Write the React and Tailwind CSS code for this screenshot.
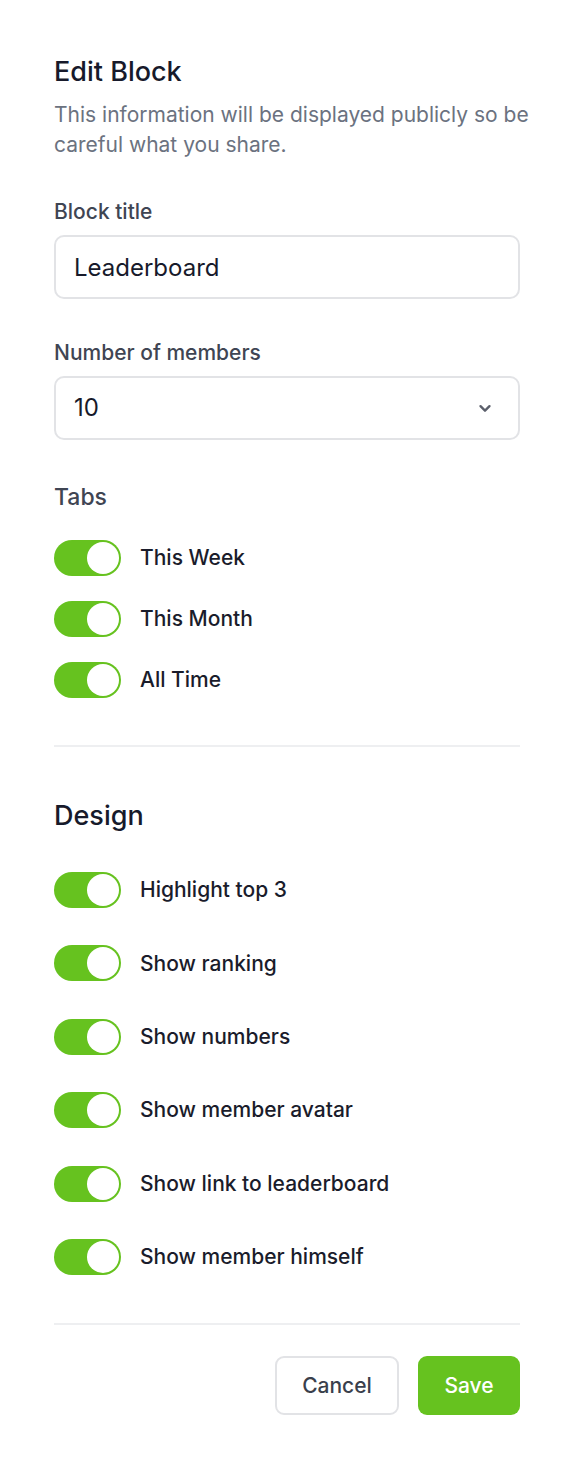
import React, { useState } from 'react';

function Toggle({ label, defaultOn = true }) {
  const [on, setOn] = useState(defaultOn);
  return (
    <label className="flex items-center gap-[19px] cursor-pointer">
      <button
        type="button"
        onClick={() => setOn(!on)}
        className={`flex items-center w-[67px] h-[36px] rounded-full p-[2px] ${on ? 'bg-[#66c21f] justify-end' : 'bg-gray-200 justify-start'}`}
      >
        <span className="block w-[32px] h-[32px] rounded-full bg-white" />
      </button>
      <span className="text-[21px] font-medium text-[#1a1c2b]">{label}</span>
    </label>
  );
}

function App() {
  const [title, setTitle] = useState('Leaderboard');
  const [count, setCount] = useState('10');

  const tabs = ['This Week', 'This Month', 'All Time'];
  const design = [
    'Highlight top 3',
    'Show ranking',
    'Show numbers',
    'Show member avatar',
    'Show link to leaderboard',
    'Show member himself',
  ];

  return (
    <div className="min-h-[1459px] bg-white px-[54px] pt-[55px] font-['Inter',sans-serif]">
      <h2 className="text-[27px] leading-[34px] font-medium text-[#171a2b]">Edit Block</h2>
      <p className="mt-[11px] -mr-[30px] text-[21px] leading-[30px] text-[#6b7280]">
        This information will be displayed publicly so be careful what you share.
      </p>

      <div className="mt-[38px]">
        <label className="block text-[21px] leading-[28px] font-medium text-[#3f4553]">Block title</label>
        <input
          type="text"
          value={title}
          onChange={(e) => setTitle(e.target.value)}
          className="mt-[9px] block w-full h-[64px] px-[18px] rounded-[10px] border-2 border-[#e2e3e6] text-[24px] text-[#171a2b] outline-none"
        />
      </div>

      <div className="mt-[40px]">
        <label className="block text-[21px] leading-[28px] font-medium text-[#3f4553]">Number of members</label>
        <div className="relative mt-[9px]">
          <select
            value={count}
            onChange={(e) => setCount(e.target.value)}
            className="block w-full h-[64px] pl-[18px] pr-[50px] rounded-[10px] border-2 border-[#e2e3e6] bg-white text-[24px] text-[#171a2b] appearance-none outline-none"
          >
            <option>5</option>
            <option>10</option>
            <option>20</option>
          </select>
          <svg
            className="pointer-events-none absolute right-[26px] top-1/2 -translate-y-1/2 w-[18px] h-[18px] text-[#5b5f6b]"
            viewBox="0 0 20 20"
            fill="none"
            stroke="currentColor"
            strokeWidth="2.6"
            strokeLinecap="round"
            strokeLinejoin="round"
          >
            <path d="M5 8l5 5 5-5" />
          </svg>
        </div>
      </div>

      <h3 className="mt-[42px] text-[23px] leading-[30px] font-medium text-[#3f4553]">Tabs</h3>
      <div className="mt-[28px] flex flex-col gap-[25px]">
        {tabs.map((t) => (
          <Toggle key={t} label={t} />
        ))}
      </div>

      <div className="mt-[47px] border-t-2 border-[#eeeff1]" />

      <h3 className="mt-[52px] text-[27px] leading-[34px] font-medium text-[#171a2b]">Design</h3>
      <div className="mt-[39px] flex flex-col gap-[37.4px]">
        {design.map((d) => (
          <Toggle key={d} label={d} />
        ))}
      </div>

      <div className="mt-[48px] border-t-2 border-[#eeeff1]" />

      <div className="mt-[31px] flex justify-end gap-[19px]">
        <button
          type="button"
          className="h-[59px] w-[124px] rounded-[9px] border-2 border-[#e2e3e6] bg-white text-[21px] font-medium text-[#3a3f4c]"
        >
          Cancel
        </button>
        <button
          type="button"
          className="h-[59px] w-[102px] rounded-[9px] bg-[#66c21f] text-[21px] font-medium text-white"
        >
          Save
        </button>
      </div>
    </div>
  );
}

export default App;
